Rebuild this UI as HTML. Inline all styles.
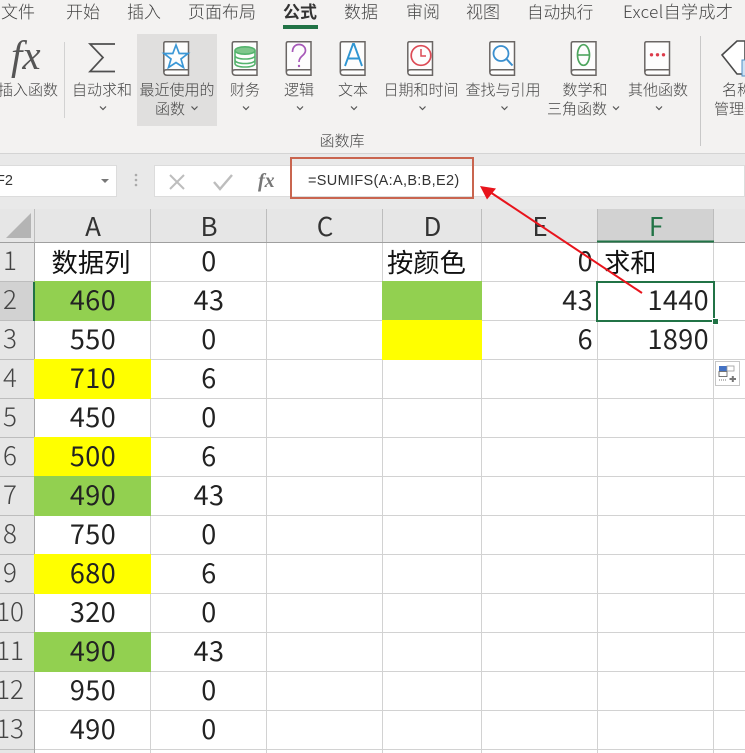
<!DOCTYPE html>
<html><head><meta charset="utf-8">
<style>
html,body{margin:0;padding:0}
body{width:745px;height:753px;overflow:hidden;position:relative;background:#fff;font-family:"Liberation Sans","Noto Sans CJK SC",sans-serif}
div{position:absolute;white-space:nowrap}
.t{font-family:"Noto Sans CJK SC",sans-serif;font-size:17px;line-height:24px;top:-1px;color:#444;font-weight:300}
.r{font-family:"Noto Sans CJK SC",sans-serif;font-size:15px;line-height:19px;color:#444;text-align:center;font-weight:300}
.c{font-family:"Noto Sans CJK SC",sans-serif;font-size:27px;line-height:39px;height:39px;color:#222;font-weight:400;letter-spacing:.4px;margin-top:-2px}
.z{font-size:26.3px;letter-spacing:0;margin-top:-1px;color:#111}
.ctr{text-align:center}
.rt{text-align:right}
.h{font-family:"Noto Sans CJK SC",sans-serif;font-size:26px;line-height:33px;top:209px;height:33px;text-align:center;color:#333;font-weight:400}
.n{font-family:"Noto Sans CJK SC",sans-serif;font-size:26px;line-height:39px;height:39px;left:-10px;width:40px;text-align:center;color:#444;font-weight:300;margin-top:-2px}
.fill{height:39.5px}
</style></head><body>
<div style="left:0;top:0;width:745px;height:153px;background:#f3f2f1"></div>
<div style="left:0;top:153px;width:745px;height:56px;background:#e9e9e9;border-top:1px solid #d4d4d4;box-sizing:border-box"></div>

<div class="t" style="left:1px">文件</div>
<div class="t" style="left:66px">开始</div>
<div class="t" style="left:127px">插入</div>
<div class="t" style="left:188px">页面布局</div>
<div class="t" style="left:283px;font-weight:700;color:#333">公式</div>
<div style="left:283px;top:25px;width:35px;height:4px;background:#217346"></div>
<div class="t" style="left:344px">数据</div>
<div class="t" style="left:406px">审阅</div>
<div class="t" style="left:466px">视图</div>
<div class="t" style="left:527px;font-size:16.6px">自动执行</div>
<div class="t" style="left:623px;letter-spacing:.4px">Excel自学成才</div>

<div style="left:137px;top:34px;width:80px;height:92px;background:#e0dfde"></div>
<div style="left:64px;top:42px;width:1px;height:76px;background:#d2d2d2"></div>
<div style="left:700px;top:36px;width:1px;height:110px;background:#c8c8c8"></div>

<svg style="position:absolute;left:0;top:0" width="745" height="153" viewBox="0 0 745 153" fill="none">
<defs>
<g id="bk"><path d="M2.5 0.8H25.5V34.2H4C1.8 34.2 0.8 33 0.8 31V2.5C0.8 1.5 1.5 .8 2.5 .8Z" fill="#fdfdfd" stroke="#6a6664" stroke-width="1.5"/><path d="M1 31C1 29 2 28.8 4 28.8H25.5" stroke="#6a6664" stroke-width="1.5"/></g>
<path id="ch" d="M-3 -1.5L0 1.5L3 -1.5" stroke="#555" stroke-width="1.2"/>
</defs>
<use href="#bk" x="163" y="41"/><use href="#bk" x="231.5" y="41"/><use href="#bk" x="285.5" y="41"/><use href="#bk" x="339.5" y="41"/><use href="#bk" x="407" y="41"/><use href="#bk" x="489" y="41"/><use href="#bk" x="570.5" y="41"/><use href="#bk" x="644" y="41"/>
<path d="M176 45L179.2 53.5H188L181 59L183.500 67.500L176 62.500L168.500 67.500L171 59L164 53.500H172.800Z" stroke="#3a97d6" stroke-width="1.7" stroke-linejoin="miter"/>
<g stroke="#54b36d" stroke-width="1.6"><ellipse cx="245" cy="50.500" rx="10" ry="3.700" fill="#7fc68c"/><path d="M235 50.500V63.500C235 65.700 239.500 67 245 67S255 65.700 255 63.500V50.500M235 55.500C235 57.700 239.500 59 245 59S255 57.700 255 55.500M235 60C235 62.200 239.500 63.500 245 63.500S255 62.200 255 60"/></g>
<path d="M292.500 52C292.500 47 295.500 44.500 299 44.500C303 44.500 305.500 47.300 305.500 50.500C305.500 55.500 299 56 299 62" stroke="#a658b8" stroke-width="1.7"/><circle cx="299" cy="66" r="1.200" fill="#a658b8"/>
<path d="M345 66L353 44H354L362 66M348 58.500H359" stroke="#2f95d2" stroke-width="1.900"/>
<circle cx="421" cy="55.500" r="9.800" stroke="#dc4a55" stroke-width="1.700"/><path d="M421 49V56H426" stroke="#dc4a55" stroke-width="1.500"/>
<circle cx="501" cy="53.500" r="7.500" stroke="#3a8fcf" stroke-width="1.800"/><path d="M506.500 59L512.500 65.500" stroke="#3a8fcf" stroke-width="2"/>
<ellipse cx="583.500" cy="55" rx="6" ry="10.300" stroke="#4ea55e" stroke-width="1.700"/><path d="M577.500 55H589.500" stroke="#4ea55e" stroke-width="1.600"/>
<g fill="#dc3b4a"><circle cx="651.500" cy="54.800" r="1.700"/><circle cx="657.500" cy="54.800" r="1.700"/><circle cx="663.500" cy="54.800" r="1.700"/></g>
<path d="M722 55L737 41H745V74H737Z" fill="#fff" stroke="#4a4a4a" stroke-width="1.600"/>
<rect x="742" y="60" width="5" height="16" fill="#cfe2f3" stroke="#4f8fc4"/>
<path d="M115 44H90L103 57.500L90 71.500H115" stroke="#4f4f4f" stroke-width="1.700"/>
<use href="#ch" x="103" y="108"/><use href="#ch" x="194.500" y="108"/><use href="#ch" x="246" y="108"/><use href="#ch" x="300" y="108"/><use href="#ch" x="354" y="108"/><use href="#ch" x="422.500" y="108"/><use href="#ch" x="504.500" y="108"/><use href="#ch" x="616" y="108"/><use href="#ch" x="659" y="108"/>
<text x="11" y="69" font-family="Liberation Serif" font-style="italic" font-size="41" fill="#555">fx</text>
</svg>

<div class="r" style="left:-2px;top:80px;width:60px">插入函数</div>
<div class="r" style="left:68px;top:80px;width:68px">自动求和</div>
<div class="r" style="left:137px;top:80px;width:80px">最近使用的</div>
<div class="r" style="left:155px;top:99px;width:30px">函数</div>
<div class="r" style="left:225px;top:80px;width:40px">财务</div>
<div class="r" style="left:279px;top:80px;width:40px">逻辑</div>
<div class="r" style="left:333px;top:80px;width:40px">文本</div>
<div class="r" style="left:380px;top:80px;width:82px">日期和时间</div>
<div class="r" style="left:463px;top:80px;width:80px">查找与引用</div>
<div class="r" style="left:555px;top:80px;width:60px">数学和</div>
<div class="r" style="left:547px;top:99px;width:60px">三角函数</div>
<div class="r" style="left:623px;top:80px;width:70px">其他函数</div>
<div class="r" style="left:722px;top:80px;width:40px;text-align:left">名称</div>
<div class="r" style="left:714px;top:99px;width:60px;text-align:left">管理器</div>
<div class="r" style="left:312px;top:131px;width:60px">函数库</div>

<div style="left:-2px;top:165px;width:119px;height:32px;background:#fff;border:1px solid #dcdcdc;box-sizing:border-box"></div>
<div style="left:-4px;top:165px;height:32px;line-height:32px;font-size:14.500px;color:#333">F2</div>
<svg style="position:absolute;left:100px;top:178px" width="10" height="6"><path d="M1 1H9L5 5Z" fill="#777"/></svg>
<svg style="position:absolute;left:133px;top:172px" width="6" height="20"><g fill="#aaa"><circle cx="3" cy="3" r="1.300"/><circle cx="3" cy="8" r="1.300"/><circle cx="3" cy="13" r="1.300"/></g></svg>
<div style="left:154px;top:165px;width:591px;height:32px;background:#fff;border:1px solid #dcdcdc;box-sizing:border-box"></div>
<svg style="position:absolute;left:154px;top:165px" width="130" height="32" fill="none"><path d="M16 10L30 24M30 10L16 24" stroke="#bdbdbd" stroke-width="2"/><path d="M60 17L66 24L78 10" stroke="#bdbdbd" stroke-width="2.400"/><text x="104" y="22" font-family="Liberation Serif" font-style="italic" font-weight="700" font-size="20" fill="#777">fx</text></svg>
<div style="left:308px;top:165px;height:32px;line-height:32px;font-size:14.500px;letter-spacing:.32px;color:#333">=SUMIFS(A:A,B:B,E2)</div>
<div style="left:290px;top:157px;width:184px;height:42px;border:2px solid #c9654f;box-sizing:border-box"></div>

<div style="left:0;top:209px;width:745px;height:33px;background:#e6e6e6"></div>
<div style="left:0;top:242px;width:34px;height:511px;background:#e6e6e6"></div>
<div style="left:597px;top:209px;width:117px;height:33px;background:#d2d2d2"></div>
<div style="left:0;top:282px;width:34px;height:39px;background:#d2d2d2"></div>
<svg style="position:absolute;left:0;top:209px" width="34" height="33"><path d="M31 4V29H6Z" fill="#b4b4b4"/></svg>

<svg style="position:absolute;left:0;top:0" width="745" height="753" fill="none">
<g stroke="#d2d2d2" stroke-width="1">
<path d="M150.500 242V753M266.500 242V753M382.500 242V753M481.500 242V753M597.500 242V753M713.500 242V753"/>
<path d="M34 281.500H745M34 320.500H745M34 359.500H745M34 398.500H745M34 437.500H745M34 476.500H745M34 515.500H745M34 554.500H745M34 593.500H745M34 632.500H745M34 671.500H745M34 710.500H745M34 749.500H745"/>
</g>
<g stroke="#bdbdbd" stroke-width="1">
<path d="M34.500 209V242M150.500 209V242M266.500 209V242M382.500 209V242M481.500 209V242M597.500 209V242M713.500 209V242"/>
<path d="M0 281.500H34M0 320.500H34M0 359.500H34M0 398.500H34M0 437.500H34M0 476.500H34M0 515.500H34M0 554.500H34M0 593.500H34M0 632.500H34M0 671.500H34M0 710.500H34M0 749.500H34"/>
</g>
<path d="M0 242.500H745" stroke="#9f9f9f"/>
<path d="M34.500 242V753" stroke="#a8a8a8"/>
<path d="M597 241.500H714" stroke="#217346" stroke-width="2"/>
</svg>

<div class="fill" style="left:34px;top:281px;width:117px;background:#92d050"></div>
<div class="fill" style="left:34px;top:359px;width:117px;background:#ff0"></div>
<div class="fill" style="left:34px;top:437px;width:117px;background:#ff0"></div>
<div class="fill" style="left:34px;top:476px;width:117px;background:#92d050"></div>
<div class="fill" style="left:34px;top:554px;width:117px;background:#ff0"></div>
<div class="fill" style="left:34px;top:632px;width:117px;background:#92d050"></div>
<div class="fill" style="left:382px;top:281px;width:100px;background:#92d050"></div>
<div class="fill" style="left:382px;top:320px;width:100px;background:#ff0"></div>
<div style="left:33px;top:282px;width:2px;height:39px;background:#217346"></div>

<div class="h" style="left:35px;width:116px">A</div>
<div class="h" style="left:151px;width:116px">B</div>
<div class="h" style="left:267px;width:116px">C</div>
<div class="h" style="left:383px;width:99px">D</div>
<div class="h" style="left:482px;width:116px">E</div>
<div class="h" style="left:598px;width:116px;color:#217346">F</div>

<div class="n" style="top:242px">1</div><div class="n" style="top:281px">2</div><div class="n" style="top:320px">3</div><div class="n" style="top:359px">4</div><div class="n" style="top:398px">5</div><div class="n" style="top:437px">6</div><div class="n" style="top:476px">7</div><div class="n" style="top:515px">8</div><div class="n" style="top:554px">9</div><div class="n" style="top:593px">10</div><div class="n" style="top:632px">11</div><div class="n" style="top:671px">12</div><div class="n" style="top:710px">13</div>

<div class="c z ctr" style="left:33px;width:116px;top:242px">数据列</div><div class="c ctr" style="left:35px;width:116px;top:281px">460</div><div class="c ctr" style="left:35px;width:116px;top:320px">550</div><div class="c ctr" style="left:35px;width:116px;top:359px">710</div><div class="c ctr" style="left:35px;width:116px;top:398px">450</div><div class="c ctr" style="left:35px;width:116px;top:437px">500</div><div class="c ctr" style="left:35px;width:116px;top:476px">490</div><div class="c ctr" style="left:35px;width:116px;top:515px">750</div><div class="c ctr" style="left:35px;width:116px;top:554px">680</div><div class="c ctr" style="left:35px;width:116px;top:593px">320</div><div class="c ctr" style="left:35px;width:116px;top:632px">490</div><div class="c ctr" style="left:35px;width:116px;top:671px">950</div><div class="c ctr" style="left:35px;width:116px;top:710px">490</div>

<div class="c ctr" style="left:151px;width:116px;top:242px">0</div><div class="c ctr" style="left:151px;width:116px;top:281px">43</div><div class="c ctr" style="left:151px;width:116px;top:320px">0</div><div class="c ctr" style="left:151px;width:116px;top:359px">6</div><div class="c ctr" style="left:151px;width:116px;top:398px">0</div><div class="c ctr" style="left:151px;width:116px;top:437px">6</div><div class="c ctr" style="left:151px;width:116px;top:476px">43</div><div class="c ctr" style="left:151px;width:116px;top:515px">0</div><div class="c ctr" style="left:151px;width:116px;top:554px">6</div><div class="c ctr" style="left:151px;width:116px;top:593px">0</div><div class="c ctr" style="left:151px;width:116px;top:632px">43</div><div class="c ctr" style="left:151px;width:116px;top:671px">0</div><div class="c ctr" style="left:151px;width:116px;top:710px">0</div>

<div class="c z" style="left:387px;top:242px">按颜色</div>
<div class="c rt" style="left:482px;width:111px;top:242px">0</div>
<div class="c rt" style="left:482px;width:111px;top:281px">43</div>
<div class="c rt" style="left:482px;width:111px;top:320px">6</div>
<div class="c z" style="left:604px;top:242px">求和</div>
<div class="c rt" style="left:598px;width:111px;top:281px">1440</div>
<div class="c rt" style="left:598px;width:111px;top:320px">1890</div>

<div style="left:596px;top:281px;width:119px;height:41px;border:2px solid #217346;box-sizing:border-box"></div>
<div style="left:712px;top:318px;width:5px;height:5px;background:#217346;border:1px solid #fff"></div>

<div style="left:715px;top:361px;width:25px;height:25px;background:#fff;border:1px solid #c6c6c6;box-sizing:border-box"></div>
<svg style="position:absolute;left:715px;top:361px" width="25" height="25" fill="none"><rect x="4" y="5" width="8" height="5" fill="#4472c4"/><rect x="4" y="10.500" width="8" height="5" stroke="#555" stroke-width=".8"/><rect x="12" y="5" width="7" height="5" stroke="#999" stroke-width=".8"/><path d="M4 19H12" stroke="#777" stroke-dasharray="1 1"/><path d="M14.500 18H21M17.800 15V21" stroke="#777" stroke-width="2"/></svg>

<svg style="position:absolute;left:0;top:0" width="745" height="753" fill="none"><path d="M642 293L490 192" stroke="#e8141c" stroke-width="2"/><path d="M480 186L496 188.500L487 199.500Z" fill="#e8141c"/></svg>
</body></html>
